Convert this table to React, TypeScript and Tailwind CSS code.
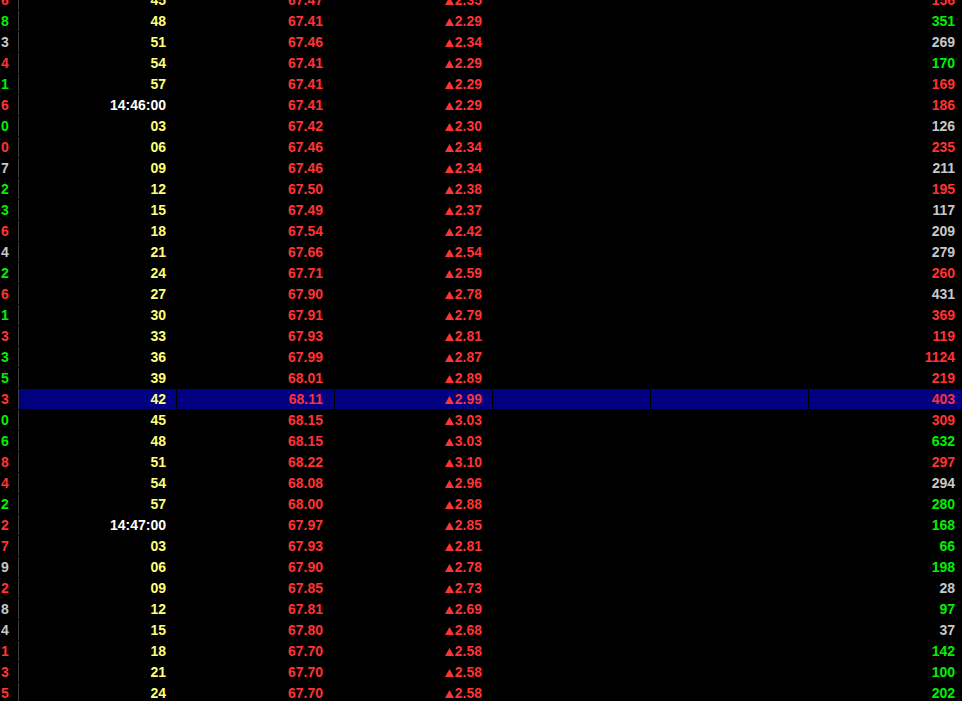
import React from "react";

type C = "r" | "g" | "w";
type Row = [string, C, string, string, string, string, C];

const rows: Row[] = [
  ["6", "r", "45", "67.47", "2.35", "156", "r"],
  ["8", "g", "48", "67.41", "2.29", "351", "g"],
  ["3", "w", "51", "67.46", "2.34", "269", "w"],
  ["4", "r", "54", "67.41", "2.29", "170", "g"],
  ["1", "g", "57", "67.41", "2.29", "169", "r"],
  ["6", "r", "14:46:00", "67.41", "2.29", "186", "r"],
  ["0", "g", "03", "67.42", "2.30", "126", "w"],
  ["0", "r", "06", "67.46", "2.34", "235", "r"],
  ["7", "w", "09", "67.46", "2.34", "211", "w"],
  ["2", "g", "12", "67.50", "2.38", "195", "r"],
  ["3", "g", "15", "67.49", "2.37", "117", "w"],
  ["6", "r", "18", "67.54", "2.42", "209", "w"],
  ["4", "w", "21", "67.66", "2.54", "279", "w"],
  ["2", "g", "24", "67.71", "2.59", "260", "r"],
  ["6", "r", "27", "67.90", "2.78", "431", "w"],
  ["1", "g", "30", "67.91", "2.79", "369", "r"],
  ["3", "r", "33", "67.93", "2.81", "119", "r"],
  ["3", "g", "36", "67.99", "2.87", "1124", "r"],
  ["5", "g", "39", "68.01", "2.89", "219", "r"],
  ["3", "r", "42", "68.11", "2.99", "403", "r"],
  ["0", "g", "45", "68.15", "3.03", "309", "r"],
  ["6", "g", "48", "68.15", "3.03", "632", "g"],
  ["8", "r", "51", "68.22", "3.10", "297", "r"],
  ["4", "r", "54", "68.08", "2.96", "294", "w"],
  ["2", "g", "57", "68.00", "2.88", "280", "g"],
  ["2", "r", "14:47:00", "67.97", "2.85", "168", "g"],
  ["7", "r", "03", "67.93", "2.81", "66", "g"],
  ["9", "w", "06", "67.90", "2.78", "198", "g"],
  ["2", "r", "09", "67.85", "2.73", "28", "w"],
  ["8", "w", "12", "67.81", "2.69", "97", "g"],
  ["4", "w", "15", "67.80", "2.68", "37", "w"],
  ["1", "r", "18", "67.70", "2.58", "142", "g"],
  ["3", "r", "21", "67.70", "2.58", "100", "g"],
  ["5", "r", "24", "67.70", "2.58", "202", "g"],
];

const colorCls: Record<C, string> = {
  r: "text-[#ff3333]",
  g: "text-[#00f000]",
  w: "text-[#c8c8c8]",
};

function Tri() {
  return (
    <svg width="9" height="8" viewBox="0 0 9 8" className="inline-block mr-px align-baseline">
      <polygon points="4.5,0 9,8 0,8" fill="#ff3333" />
    </svg>
  );
}

export default function App() {
  return (
    <div
      className="w-[962px] h-[701px] overflow-hidden bg-black"
      style={{ fontFamily: '"Liberation Sans", Arial, sans-serif' }}
    >
      <div className="-mt-[10px] flex flex-col gap-px text-[14px] font-bold leading-[20px]">
        {rows.map((r, i) => {
          const sel = i === 19;
          const cellBg = sel ? "bg-[#000080]" : "bg-black";
          const isFull = r[2].includes(":");
          return (
            <div key={i} className="flex h-[20px] shrink-0">
              <div className={`w-[19px] shrink-0 border-r border-[#404040] pl-[1px] ${colorCls[r[1]]}`}>
                {r[0]}
              </div>
              <div
                className={`w-[158px] shrink-0 border-r border-black pr-[10px] text-right ${cellBg} ${
                  isFull ? "text-white" : "text-[#ffff77]"
                }`}
              >
                {r[2]}
              </div>
              <div className={`w-[158px] shrink-0 border-r border-black pr-[11px] text-right text-[#ff3333] ${cellBg}`}>
                {r[3]}
              </div>
              <div className={`w-[158px] shrink-0 border-r border-black pr-[10px] text-right text-[#ff3333] ${cellBg}`}>
                <Tri />
                {r[4]}
              </div>
              <div className={`w-[158px] shrink-0 border-r border-black ${cellBg}`}></div>
              <div className={`w-[158px] shrink-0 border-r border-black ${cellBg}`}></div>
              <div className={`flex-1 pr-[7px] text-right ${cellBg} ${colorCls[r[6]]}`}>{r[5]}</div>
            </div>
          );
        })}
      </div>
    </div>
  );
}
